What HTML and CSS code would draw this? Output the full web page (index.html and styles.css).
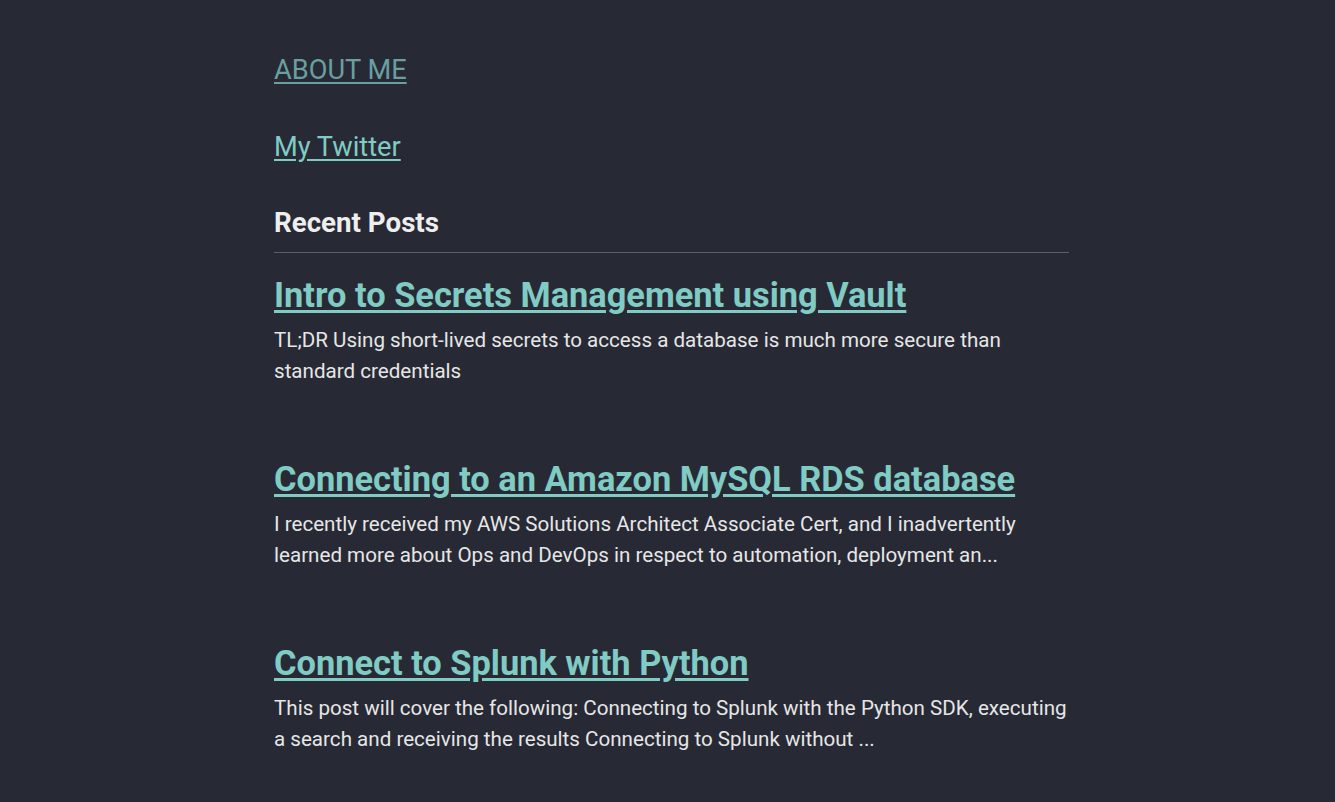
FILE: index.html
```html
<!DOCTYPE html>
<html>
<head>
<meta charset="utf-8">
<link rel="stylesheet" href="styles.css">
</head>
<body>
<main class="page">
  <p class="nav"><a class="visited" href="#">ABOUT ME</a></p>
  <p class="nav"><a href="#">My Twitter</a></p>
  <h2 class="section-title">Recent Posts</h2>
  <hr class="rule">
  <article class="post">
    <h1 class="post-title"><a href="#">Intro to Secrets Management using Vault</a></h1>
    <p class="post-summary">TL;DR Using short-lived secrets to access a database is much more secure than standard credentials</p>
  </article>
  <article class="post">
    <h1 class="post-title"><a href="#">Connecting to an Amazon MySQL RDS database</a></h1>
    <p class="post-summary">I recently received my AWS Solutions Architect Associate Cert, and I inadvertently learned more about Ops and DevOps in respect to automation, deployment an...</p>
  </article>
  <article class="post">
    <h1 class="post-title"><a href="#">Connect to Splunk with Python</a></h1>
    <p class="post-summary">This post will cover the following: Connecting to Splunk with the Python SDK, executing a search and receiving the results Connecting to Splunk without ...</p>
  </article>
</main>
</body>
</html>
```
FILE: styles.css
```css
html, body {
  margin: 0;
  padding: 0;
  background: #272a35;
  font-family: Roboto, "Liberation Sans", sans-serif;
  color: #e6e6e6;
}
.page {
  width: 795px;
  margin: 0 auto;
  padding: 48px 0 0 8px;
}
.nav {
  margin: 0 0 33px;
  font-size: 27.2px;
  line-height: 44px;
}
.nav a {
  color: #80cbc4;
  text-decoration: underline;
  text-underline-offset: 3px;
}
.nav a.visited {
  color: #6a9fa0;
}
.section-title {
  margin: 0;
  font-size: 27.7px;
  line-height: 42px;
  font-weight: 700;
  color: #eeeeee;
}
.rule {
  margin: 8px 0 20px;
  border: 0;
  border-top: 1px solid #5c5f69;
  height: 0;
}
.post {
  margin: 0 0 69.5px;
}
.post-title {
  margin: 0 0 8px;
  font-size: 34.4px;
  line-height: 44px;
  font-weight: 700;
}
.post-title a {
  color: #80cbc4;
  text-decoration: underline;
  text-underline-offset: 3px;
}
.post-summary {
  margin: 0;
  font-size: 20.6px;
  line-height: 31.2px;
  color: #e6e6e6;
}
```
